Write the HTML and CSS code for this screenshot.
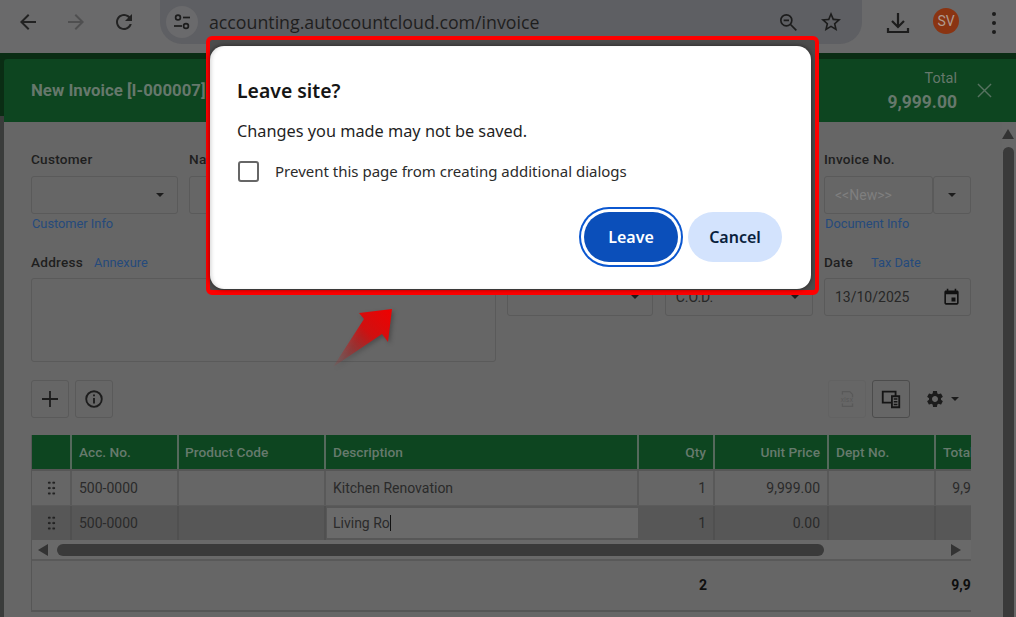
FILE: index.html
```html
<!DOCTYPE html>
<html lang="en">
<head>
<meta charset="utf-8">
<title>New Invoice</title>
<link rel="stylesheet" href="styles.css">
</head>
<body>
<div class="stage">
  <header class="chrome">
    <svg class="nav-icon" viewBox="0 0 24 24"><path d="M20 11H7.83l5.59-5.59L12 4l-8 8 8 8 1.41-1.41L7.83 13H20v-2z"/></svg>
    <svg class="nav-icon faded" viewBox="0 0 24 24"><path d="M4 11h12.17l-5.59-5.59L12 4l8 8-8 8-1.41-1.41L16.17 13H4v-2z"/></svg>
    <svg class="nav-icon" viewBox="0 0 24 24"><path d="M17.65 6.35C16.2 4.9 14.21 4 12 4c-4.42 0-7.99 3.58-7.99 8s3.57 8 7.99 8c3.73 0 6.84-2.55 7.73-6h-2.08c-.82 2.33-3.04 4-5.65 4-3.31 0-6-2.69-6-6s2.69-6 6-6c1.66 0 3.14.69 4.22 1.78L13 11h7V4l-2.35 2.35z"/></svg>
    <div class="omnibox">
      <span class="tune">
        <svg viewBox="0 0 20 20" class="tune-icon"><circle cx="6" cy="5.5" r="2.4"/><path d="M11 5.5h7"/><circle cx="14" cy="14" r="2.4"/><path d="M2 14h8"/></svg>
      </span>
      <span class="url">accounting.autocountcloud.com/invoice</span>
      <svg class="omni-icon" viewBox="0 0 24 24"><circle cx="10" cy="10" r="6.6"/><path d="M6.8 10h6.4M15 15l7 7"/></svg>
      <svg class="omni-star" viewBox="0 0 24 24"><path d="M22 9.24l-7.19-.62L12 2 9.19 8.63 2 9.24l5.46 4.73L5.82 21 12 17.27 18.18 21l-1.63-7.03L22 9.24zM12 15.4l-3.76 2.27 1-4.28-3.32-2.88 4.38-.38L12 6.1l1.71 4.04 4.38.38-3.32 2.88 1 4.28L12 15.4z"/></svg>
    </div>
    <svg class="download" viewBox="0 0 24 24"><path d="M12 2v13M6 10l6 6 6-6M2 17v4h20v-4"/></svg>
    <span class="avatar">SV</span>
    <span class="kebab"><i></i><i></i><i></i></span>
  </header>

  <div class="app">
    <div class="app-edge"></div>
    <div class="app-main">
      <div class="title-bar">
        <h1 class="doc-title">New Invoice [I-000007]</h1>
        <div class="total">
          <span class="total-label">Total</span>
          <strong class="total-value">9,999.00</strong>
        </div>
        <svg class="close" viewBox="0 0 16 16"><path d="M1 1l14 14M15 1L1 15"/></svg>
      </div>

      <div class="workspace">
        <main class="form">
          <section class="row-top">
            <div class="field">
              <label class="lbl">Customer</label>
              <div class="input"><span class="caret"></span></div>
              <a class="link under">Customer Info</a>
            </div>
            <div class="field">
              <label class="lbl">Name</label>
              <div class="input"></div>
            </div>
            <div class="field">
              <label class="lbl">Invoice No.</label>
              <div class="split">
                <div class="input grow"><span class="ghost">&lt;&lt;New&gt;&gt;</span></div>
                <div class="input side"><span class="caret"></span></div>
              </div>
              <a class="link under">Document Info</a>
            </div>
          </section>

          <section class="row-mid">
            <div class="field">
              <div class="lbl-line"><label class="lbl">Address</label><a class="link">Annexure</a></div>
              <div class="input tall"></div>
            </div>
            <div class="field">
              <div class="lbl-line"><label class="lbl">&nbsp;</label></div>
              <div class="input"><span class="caret"></span></div>
            </div>
            <div class="field">
              <div class="lbl-line"><label class="lbl">&nbsp;</label></div>
              <div class="input"><span class="val">C.O.D.</span><span class="caret"></span></div>
            </div>
            <div class="field">
              <div class="lbl-line wide"><label class="lbl">Date</label><a class="link">Tax Date</a></div>
              <div class="input"><span class="val">13/10/2025</span>
                <svg class="cal" viewBox="0 0 24 24"><path d="M17 12h-5v5h5v-5zM16 1v2H8V1H6v2H5c-1.11 0-1.99.9-1.99 2L3 19c0 1.1.89 2 2 2h14c1.1 0 2-.9 2-2V5c0-1.1-.9-2-2-2h-1V1h-2zm3 18H5V8h14v11z"/></svg>
              </div>
            </div>
          </section>

          <section class="actions">
            <button class="btn" type="button"><svg viewBox="0 0 24 24" class="btn-icon"><path d="M12 4v16M4 12h16"/></svg></button>
            <button class="btn" type="button"><svg viewBox="0 0 24 24" class="btn-icon thin"><circle cx="12" cy="12" r="8.5"/><path d="M12 11v6M12 7v2"/></svg></button>
            <span class="spacer"></span>
            <button class="btn off" type="button"><svg viewBox="0 0 24 24" class="xlsx"><path d="M7 7V4h8l3 3v3M7 17v3h11v-3"/><text x="12" y="15.5" text-anchor="middle">xlsx</text></svg></button>
            <button class="btn strong" type="button"><svg viewBox="0 0 24 24" class="panes"><path d="M3 4h14v12H3z"/><path d="M13 9h8v12h-8z" class="panes-fill"/><path d="M15 12h4M15 15h4M15 18h4" class="panes-line"/></svg></button>
            <div class="gear">
              <svg viewBox="0 0 24 24"><path d="M19.14 12.94c.04-.3.06-.61.06-.94 0-.32-.02-.64-.07-.94l2.03-1.58c.18-.14.23-.41.12-.61l-1.92-3.32c-.12-.22-.37-.29-.59-.22l-2.39.96c-.5-.38-1.03-.7-1.62-.94l-.36-2.54c-.04-.24-.24-.41-.48-.41h-3.84c-.24 0-.43.17-.47.41l-.36 2.54c-.59.24-1.13.57-1.62.94l-2.39-.96c-.22-.08-.47 0-.59.22L2.74 8.87c-.12.21-.08.47.12.61l2.03 1.58c-.05.3-.09.63-.09.94s.02.64.07.94l-2.03 1.58c-.18.14-.23.41-.12.61l1.92 3.32c.12.22.37.29.59.22l2.39-.96c.5.38 1.03.7 1.62.94l.36 2.54c.05.24.24.41.48.41h3.84c.24 0 .44-.17.47-.41l.36-2.54c.59-.24 1.13-.56 1.62-.94l2.39.96c.22.08.47 0 .59-.22l1.92-3.32c.12-.22.07-.47-.12-.61l-2.01-1.58zM12 15.6c-1.98 0-3.6-1.62-3.6-3.6s1.62-3.6 3.6-3.6 3.6 1.62 3.6 3.6-1.62 3.6-3.6 3.6z"/></svg>
              <span class="caret"></span>
            </div>
          </section>

          <section class="table">
            <div class="tr head">
              <div class="td"></div>
              <div class="td">Acc. No.</div>
              <div class="td">Product Code</div>
              <div class="td">Description</div>
              <div class="td num">Qty</div>
              <div class="td num">Unit Price</div>
              <div class="td">Dept No.</div>
              <div class="td clip">Total</div>
            </div>
            <div class="tr body">
              <div class="td grip"><span class="dots"></span></div>
              <div class="td">500-0000</div>
              <div class="td"></div>
              <div class="td">Kitchen Renovation</div>
              <div class="td num">1</div>
              <div class="td num">9,999.00</div>
              <div class="td"></div>
              <div class="td clip num">9,999.00</div>
            </div>
            <div class="tr body active">
              <div class="td grip"><span class="dots"></span></div>
              <div class="td">500-0000</div>
              <div class="td"></div>
              <div class="td editing"><span class="edit-box">Living Ro<i class="cursor"></i></span></div>
              <div class="td num">1</div>
              <div class="td num">0.00</div>
              <div class="td"></div>
              <div class="td clip"></div>
            </div>
            <div class="hscroll">
              <span class="arrow-left"></span>
              <span class="hthumb"></span>
              <span class="arrow-right"></span>
            </div>
            <div class="tr foot">
              <div class="td"></div>
              <div class="td"></div>
              <div class="td"></div>
              <div class="td"></div>
              <div class="td num">2</div>
              <div class="td"></div>
              <div class="td"></div>
              <div class="td clip num">9,999.00</div>
            </div>
          </section>
        </main>
        <aside class="vscroll">
          <span class="arrow-up"></span>
          <span class="vthumb"></span>
        </aside>
      </div>
    </div>
  </div>

  <svg class="callout" viewBox="0 0 70 70" aria-hidden="true">
    <defs>
      <linearGradient id="fade" x1="1" y1="0" x2="0" y2="1">
        <stop offset="0" stop-color="#f00000"/>
        <stop offset="0.4" stop-color="#d01010"/>
        <stop offset="1" stop-color="#a03030" stop-opacity="0.1"/>
      </linearGradient>
    </defs>
    <path d="M62 2 29 6 34 12 3 60 52 27 58 35Z" fill="url(#fade)"/>
  </svg>

  <div class="frame">
    <div class="dialog">
      <h2 class="dlg-title">Leave site?</h2>
      <p class="dlg-text">Changes you made may not be saved.</p>
      <div class="dlg-check"><span class="box"></span><span>Prevent this page from creating additional dialogs</span></div>
      <div class="dlg-buttons">
        <button class="pill primary" type="button">Leave</button>
        <button class="pill secondary" type="button">Cancel</button>
      </div>
    </div>
  </div>
</div>
</body>
</html>
```

FILE: styles.css
```css
* { box-sizing: border-box; }
html, body { margin: 0; padding: 0; }
body { font-family: Roboto, "Liberation Sans", sans-serif; background: #666; }
.stage { position: relative; width: 1016px; height: 617px; overflow: hidden; display: flex; flex-direction: column; background: #666; }

/* browser toolbar */
.chrome { height: 53px; flex: none; display: flex; align-items: flex-start; background: #6a6a6b; }
.nav-icon { width: 24px; height: 24px; margin-top: 10px; margin-right: 24px; fill: #222; flex: none; }
.nav-icon:first-child { margin-left: 16px; }
.nav-icon.faded { fill: #4f4f50; }
.omnibox { position: relative; flex: none; width: 702px; height: 44px; margin-right: 24px; background: #5e5f63; border-radius: 0 0 22px 22px; display: flex; align-items: center; padding-left: 6px; }
.tune { width: 32px; height: 32px; border-radius: 50%; background: #6a6a6c; display: flex; align-items: center; justify-content: center; flex: none; }
.tune-icon { width: 20px; height: 20px; fill: none; stroke: #1c1c1c; stroke-width: 1.7; }
.url { margin-left: 11px; font: 17.75px "Open Sans", "Noto Sans", sans-serif; color: #1e1e1e; white-space: nowrap; flex: 1; }
.omni-icon { width: 20px; height: 20px; fill: none; stroke: #1c1c1c; stroke-width: 2; flex: none; margin-right: 21px; }
.omni-star { width: 24px; height: 24px; fill: #1c1c1c; flex: none; margin-right: 19px; }
.download { width: 24px; height: 24px; fill: none; stroke: #1c1c1c; stroke-width: 2.2; margin-top: 11px; flex: none; margin-right: 23px; }
.avatar { width: 26px; height: 26px; margin-top: 8px; border-radius: 50%; background: #8a3412; color: #b09a8f; font-size: 14px; display: flex; align-items: center; justify-content: center; flex: none; margin-right: 33px; }
.kebab { display: flex; flex-direction: column; gap: 5px; margin-top: 12px; flex: none; }
.kebab i { width: 4px; height: 4px; border-radius: 50%; background: #1c1c1c; display: block; }

/* application */
.app { flex: 1; display: flex; min-height: 0; background: #0a2d14; }
.app-edge { width: 4px; flex: none; background: #3a3c3b; margin-top: 63px; }
.app-main { flex: 1; min-width: 0; display: flex; flex-direction: column; padding-top: 6px; }
.title-bar { height: 63px; flex: none; background: #0d4520; display: flex; align-items: center; padding-left: 27px; padding-right: 24px; border-top-left-radius: 3px; }
.doc-title { margin: 0 0 2px; font-size: 16.8px; font-weight: 700; color: #66786c; flex: 1; white-space: nowrap; }
.total { display: flex; flex-direction: column; align-items: flex-end; margin-right: 20px; color: #66786c; margin-top: 3px; }
.total-label { font-size: 14.5px; line-height: 20px; }
.total-value { font-size: 17.5px; line-height: 27px; }
.close { width: 15px; height: 15px; fill: none; stroke: #567260; stroke-width: 1.5; flex: none; }
.workspace { flex: 1; display: flex; background: #666; min-height: 0; }
.form { width: 998px; flex: none; padding: 30px 31px 0 27px; }

.field { display: flex; flex-direction: column; min-width: 0; }
.lbl { font-size: 13.6px; font-weight: 500; line-height: 16px; color: #1e1e1e; white-space: nowrap; letter-spacing: .25px; }
.row-top .lbl { line-height: 14px; margin-bottom: 2px; }
.link { font-size: 12.8px; color: #254a7c; line-height: 16px; white-space: nowrap; }
.under { margin-top: 2px; margin-left: 1px; }
.input { height: 38px; margin-top: 8px; border: 1px solid #5a5a5a; border-radius: 3px; display: flex; align-items: center; justify-content: space-between; padding: 0 13px 0 10px; font-size: 14px; color: #272727; position: relative; }
.caret { width: 0; height: 0; border-left: 4.5px solid transparent; border-right: 4.5px solid transparent; border-top: 4.5px solid #1c1c1c; margin-left: auto; flex: none; }
.row-top { display: grid; grid-template-columns: 147px 1fr 147px; column-gap: 11px; height: 102px; }
.split { display: flex; }
.grow { flex: 1; }
.side { width: 38px; flex: none; padding: 0; justify-content: center; }
.side .caret { margin: 0; }
.ghost { color: #7f7f7f; font-size: 14px; }
.row-mid { display: grid; grid-template-columns: 465px 146px 148px 147px; column-gap: 11.33px; height: 108px; }
.lbl-line { display: flex; gap: 11px; align-items: baseline; height: 16px; }
.lbl-line.wide { gap: 18px; }
.tall { height: 84px; }
.val { white-space: nowrap; }
.cal { width: 19px; height: 19px; fill: #111; margin-right: -4px; flex: none; }

.actions { display: flex; align-items: center; gap: 6px; height: 38px; margin-top: 18px; }
.spacer { flex: 1; }
.btn { width: 38px; height: 38px; padding: 0; background: transparent; border: 1px solid #5a5a5a; border-radius: 3px; display: flex; align-items: center; justify-content: center; }
.btn.off { border-color: #626262; }
.btn.strong { border-color: #4c4c4c; }
.btn-icon { width: 24px; height: 24px; fill: none; stroke: #1c1c1c; stroke-width: 1.8; }
.btn-icon.thin { width: 22px; height: 22px; stroke-width: 2; }
.xlsx { width: 22px; height: 22px; fill: none; stroke: #595959; stroke-width: 1.4; }
.xlsx text { font: 7px "Liberation Sans", sans-serif; fill: #575757; stroke: none; letter-spacing: .4px; }
.panes { width: 22px; height: 22px; fill: none; stroke: #151515; stroke-width: 2; }
.panes-fill { fill: #666; }
.panes-line { stroke-width: 1.6; }
.gear { display: flex; align-items: center; width: 55px; padding-left: 9px; gap: 6px; }
.gear svg { width: 20px; height: 20px; fill: #1c1c1c; flex: none; }
.gear .caret { margin: 0; }

.table { margin-top: 17px; border: 1px solid #565656; border-top: 0; border-right: 0; width: 940px; overflow: hidden; }
.tr { display: grid; grid-template-columns: 40px 107px 147px 313px 76px 114px 107px 77px; font-size: 14px; color: #2a2a2a; }
.td { display: flex; align-items: center; padding: 0 6px 0 7px; border-right: 2px solid #595959; white-space: nowrap; overflow: hidden; min-width: 0; }
.td.clip { border-right: 0; }
.td.num { justify-content: flex-end; padding-right: 7px; }
.head { height: 36px; background: #0d4520; color: #667a6d; font-size: 13.7px; font-weight: 500; border-bottom: 2px solid #565656; }
.head .td { border-right-color: #55695c; padding-left: 6px; }
.head .td:nth-child(2), .head .td:nth-child(4), .head .td:nth-child(7), .head .td:nth-child(8) { padding-left: 7px; }
.body { height: 35px; border-bottom: 1px solid #5b5b5b; }
.active { background: #575757; height: 34px; border-bottom: 0; }
.active .td { border-right-color: #505050; }
.grip { justify-content: center; padding: 0; }
.dots { width: 9px; height: 16px; background-image: radial-gradient(circle, #222 1.2px, transparent 1.4px); background-size: 4.5px 5.4px; }
.editing { padding: 2px 1px 2px 1px; border-right: 0; background: #575757; }
.edit-box { flex: 1; height: 100%; background: #6a6a6a; padding: 0 6px; display: flex; align-items: center; align-self: stretch; }
.cursor { width: 1px; height: 16px; background: #111; display: block; }
.hscroll { height: 21px; display: flex; align-items: center; padding: 0 10px 0 6px; border-bottom: 2px solid #595959; background: #696969; }
.arrow-left { width: 0; height: 0; border-top: 6.5px solid transparent; border-bottom: 6.5px solid transparent; border-right: 10px solid #333; flex: none; }
.hthumb { width: 767px; height: 12px; border-radius: 6px; background: #3a3a3a; margin-left: 9px; flex: none; }
.arrow-right { width: 0; height: 0; border-top: 6.5px solid transparent; border-bottom: 6.5px solid transparent; border-left: 10px solid #333; margin-left: auto; flex: none; }
.foot { height: 50px; font-weight: 700; color: #0e0e0e; border-bottom: 1px solid #565656; }
.foot .td { border-right: 0; padding-top: 0; padding-bottom: 1px; }
.foot .td.num { padding-right: 8px; }
.foot .td.clip.num { padding-right: 6px; }

.vscroll { flex: 1; display: flex; flex-direction: column; align-items: center; padding-right: 3px; background: #676767; }
.arrow-up { width: 0; height: 0; border-left: 6.5px solid transparent; border-right: 6.5px solid transparent; border-bottom: 10px solid #333; margin-top: 7px; flex: none; }
.vthumb { width: 11px; flex: 1; margin-top: 8px; border-radius: 6px 6px 0 0; background: #3a3a3a; }

/* callout arrow */
.callout { position: absolute; left: 330px; top: 307px; width: 70px; height: 70px; filter: drop-shadow(2px 2px 2px rgba(0,0,0,.25)); }

/* dialog frame and dialog */
.frame { position: absolute; left: 206px; top: 36px; width: 613px; height: 259px; border: 4px solid #f00; border-bottom-width: 5px; border-radius: 6px; padding: 6px 4px 1px 0; background: #4c4c4c; }
.dialog { height: 100%; background: #fff; border-radius: 14px; padding: 32px 29px 0 27px; box-shadow: 0 0 5px rgba(0,0,0,.55), inset 3px 0 4px -2px rgba(0,0,0,.18); font-family: "Noto Sans", "Open Sans", sans-serif; color: #1f1f1f; display: flex; flex-direction: column; }
.dlg-title { margin: 0; font-size: 19.4px; font-weight: 600; line-height: 26px; color: #151515; }
.dlg-text { margin: 16px 0 0; font-size: 16.3px; line-height: 22px; }
.dlg-check { display: flex; align-items: center; gap: 16px; margin-top: 18px; font-size: 15px; line-height: 22px; color: #2b2b2b; }
.box { width: 21px; height: 21px; border: 2px solid #666; border-radius: 3px; margin-left: 1px; flex: none; }
.dlg-buttons { display: flex; justify-content: flex-end; gap: 10px; margin-top: 30px; }
.pill { width: 94px; height: 50px; border: 0; border-radius: 25px; font: 600 16px "Noto Sans", "Open Sans", sans-serif; padding: 0; }
.primary { background: #0b4fba; color: #fff; box-shadow: 0 0 0 3px #fff, 0 0 0 5px #0b57d0; }
.secondary { background: #d3e3fd; color: #0a1f3d; }
```
